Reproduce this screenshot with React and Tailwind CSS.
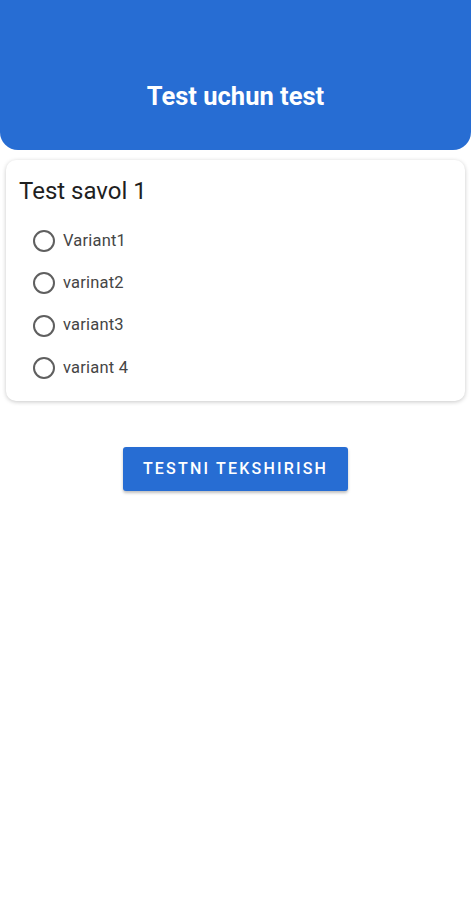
const options = ['Variant1', 'varinat2', 'variant3', 'variant 4'];

export default function App() {
  return (
    <div className="min-h-[900px] bg-white" style={{ fontFamily: 'Roboto, "Noto Sans", sans-serif' }}>
      {/* Header */}
      <div className="h-[150px] bg-[#276dd3] rounded-b-[18px] flex items-end justify-center pb-[41px]">
        <h1 className="text-white text-[25.5px] font-bold leading-none">Test uchun test</h1>
      </div>

      {/* Question card */}
      <div className="mx-[6px] mt-[10px] rounded-[10px] bg-white shadow-[0_1px_4px_rgba(0,0,0,0.22)] pt-[17px] pb-[12px]">
        <h2 className="px-[13px] text-[24px] text-[#1f1f1f] leading-[28px]">Test savol 1</h2>
        <div className="mt-[15px] flex flex-col">
          {options.map((opt) => (
            <label key={opt} className="flex items-center h-[42.3px] pl-[27px]">
              <span className="w-[22px] h-[22px] rounded-full border-2 border-[#5f5f5f]" />
              <span className="ml-[8px] text-[16.5px] text-[#454545] tracking-[0.2px]">{opt}</span>
            </label>
          ))}
        </div>
      </div>

      {/* Button */}
      <div className="flex justify-center mt-[46px]">
        <button className="w-[225px] h-[44px] rounded-[3px] bg-[#276dd3] text-white text-[16px] font-medium tracking-[2.2px] shadow-[0_2px_3px_rgba(0,0,0,0.25)]">
          TESTNI TEKSHIRISH
        </button>
      </div>
    </div>
  );
}
